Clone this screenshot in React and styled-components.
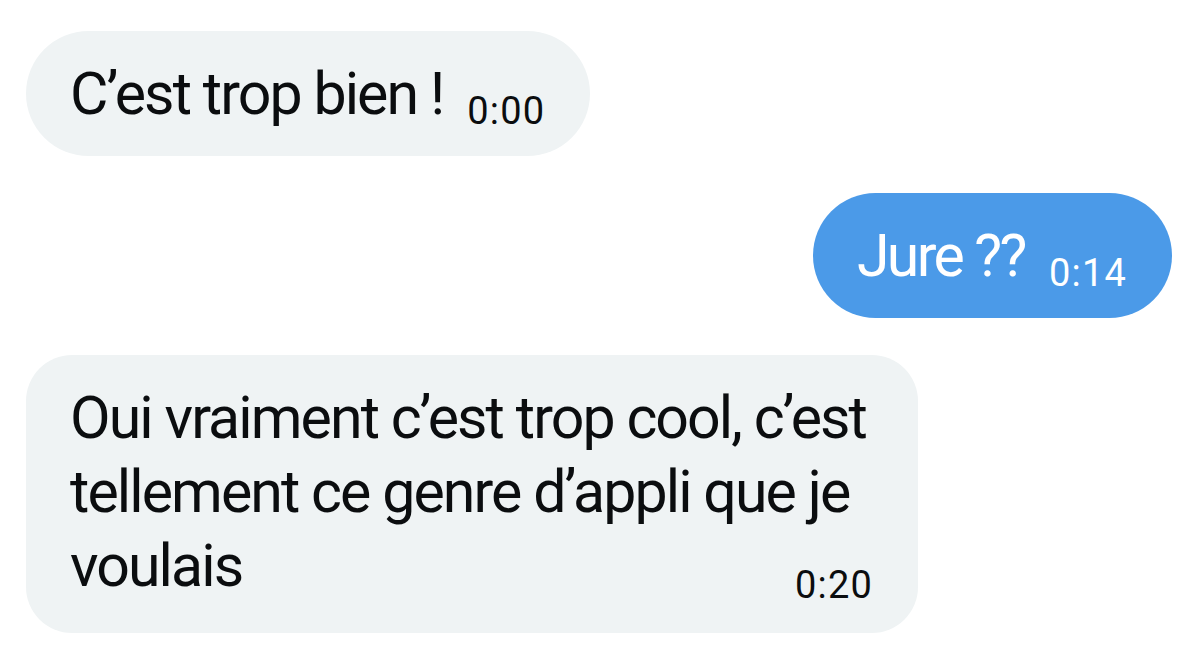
import React from "react";
import styled, { createGlobalStyle } from "styled-components";

const GlobalStyle = createGlobalStyle`
  html, body {
    margin: 0;
    padding: 0;
    background: #ffffff;
  }
  body {
    font-family: Roboto, "Noto Sans", "Liberation Sans", sans-serif;
    -webkit-font-smoothing: antialiased;
  }
`;

const Thread = styled.div`
  display: flex;
  flex-direction: column;
  gap: 37px;
  padding: 31px 28px 0 26px;
  width: 1200px;
  height: 667px;
  box-sizing: border-box;
`;

const Row = styled.div`
  display: flex;
  justify-content: ${props => (props.$mine ? "flex-end" : "flex-start")};
`;

// single-line bubbles are pills, longer ones get softer corners and a bit more room below
const Bubble = styled.div`
  display: flow-root;
  box-sizing: border-box;
  max-width: 892px;
  padding: 26px 45px ${props => (props.$pill ? "25px" : "29px")} 44px;
  border-radius: ${props => (props.$pill ? "63px" : "46px")};
  background: ${props => (props.$mine ? "#4b9ae8" : "#eff3f4")};
  color: ${props => (props.$mine ? "#ffffff" : "#0b0d0f")};
  font-size: 59px;
  line-height: 74px;
  letter-spacing: ${props => (props.$mine ? "-2.6px" : "-1.9px")};
`;

const Time = styled.span`
  float: right;
  margin: ${props => (props.$pill ? "35px" : "37px")} 0 0 24px;
  font-size: 38px;
  line-height: 1;
  letter-spacing: 1.2px;
`;

const messages = [
  { id: 1, text: "C’est trop bien !", time: "0:00" },
  { id: 2, text: "Jure ??", time: "0:14", mine: true },
  {
    id: 3,
    text: "Oui vraiment c’est trop cool, c’est tellement ce genre d’appli que je voulais",
    time: "0:20",
  },
];

const App = () => (
  <>
    <GlobalStyle />
    <Thread>
      {messages.map(msg => {
        const pill = msg.text.length < 30;
        return (
          <Row key={msg.id} $mine={msg.mine}>
            <Bubble $mine={msg.mine} $pill={pill}>
              {msg.text}
              <Time $pill={pill}>{msg.time}</Time>
            </Bubble>
          </Row>
        );
      })}
    </Thread>
  </>
);

export default App;
